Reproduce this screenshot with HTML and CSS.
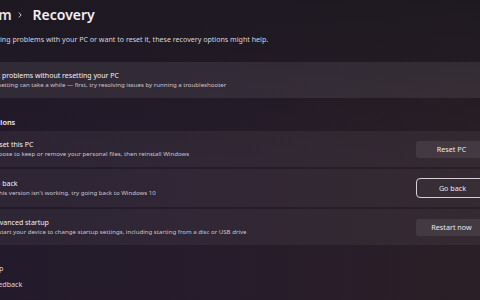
FILE: index.html
```html
<!DOCTYPE html>
<html lang="en">
<head>
    <meta charset="UTF-8">
    <title>Recovery</title>
    <link rel="stylesheet" href="styles.css">
</head>
<body>
    <div class="page">
        <div class="breadcrumb">
            <span class="crumb">System</span>
            <svg class="chevron" viewBox="0 0 6 10"><path d="M1 1l4 4-4 4"></path></svg>
            <span class="current">Recovery</span>
        </div>
        <p class="intro">If you're having problems with your PC or want to reset it, these recovery options might help.</p>

        <div class="card card-plain">
            <span class="card-icon"></span>
            <div class="card-text">
                <div class="card-title">Fix problems without resetting your PC</div>
                <div class="card-sub">Resetting can take a while — first, try resolving issues by running a troubleshooter</div>
            </div>
        </div>

        <h2 class="section">Recovery options</h2>

        <div class="group">
            <div class="card">
                <span class="card-icon"></span>
                <div class="card-text">
                    <div class="card-title">Reset this PC</div>
                    <div class="card-sub">Choose to keep or remove your personal files, then reinstall Windows</div>
                </div>
                <button class="btn">Reset PC</button>
            </div>
            <div class="card">
                <span class="card-icon"></span>
                <div class="card-text">
                    <div class="card-title">Go back</div>
                    <div class="card-sub">If this version isn't working, try going back to Windows 10</div>
                </div>
                <button class="btn btn-focus">Go back</button>
            </div>
            <div class="card">
                <span class="card-icon"></span>
                <div class="card-text">
                    <div class="card-title">Advanced startup</div>
                    <div class="card-sub">Restart your device to change startup settings, including starting from a disc or USB drive</div>
                </div>
                <button class="btn">Restart now</button>
            </div>
        </div>

        <div class="links">
            <a class="link"><span class="link-icon"></span>Get help</a>
            <a class="link"><span class="link-icon"></span>Give feedback</a>
        </div>
    </div>
</body>
</html>
```

FILE: styles.css
```css
:root {
    --text: #f4f0f4;
    --text-dim: #cbc5cc;
    --card: rgba(255, 255, 255, 0.05);
    --card-plain: rgba(255, 255, 255, 0.08);
    --btn: rgba(255, 255, 255, 0.08);
}

html, body {
    height: 100%;
}

body {
    margin: 0;
    overflow: hidden;
    font-family: "Noto Sans", "Open Sans", sans-serif;
    color: var(--text);
    background:
        linear-gradient(180deg, rgba(28, 24, 32, 0.85) 0%, rgba(28, 24, 32, 0) 55%),
        linear-gradient(90deg, #231a2b 0%, #261c2b 45%, #2b1f26 100%);
}

.page {
    width: 546px;
    margin-left: -46px;
    padding-top: 4px;
}

.breadcrumb {
    display: flex;
    align-items: center;
    gap: 6px;
    margin-left: 8px;
    font-size: 14px;
    font-weight: 600;
    line-height: 22px;
}

.crumb {
    color: #e6e2e8;
}

.chevron {
    width: 4px;
    height: 6px;
    margin-right: 5px;
    fill: none;
    stroke: #d8d4da;
    stroke-width: 1.6;
}

.intro {
    margin: 7px 0 0 5px;
    font-size: 7.1px;
    line-height: 12px;
    color: #d8d4da;
}

.card {
    display: flex;
    align-items: center;
    gap: 11px;
    padding: 9px 13px 9px 12px;
    background: var(--card);
    border-radius: 4px;
}

.card-plain {
    margin-top: 17px;
    background: var(--card-plain);
}

.card-icon {
    width: 14px;
    height: 14px;
}

.card-text {
    flex: 1;
}

.card-title {
    font-size: 7px;
    line-height: 9px;
    color: var(--text);
}

.card-sub {
    font-size: 6.1px;
    line-height: 9px;
    color: var(--text-dim);
}

.section {
    margin: 18px 0 3px;
    font-size: 7.3px;
    font-weight: 600;
    line-height: 12px;
    color: var(--text);
}

.group {
    display: flex;
    flex-direction: column;
    gap: 2px;
}

.btn {
    width: 71px;
    height: 17px;
    padding: 0;
    border: none;
    border-radius: 3px;
    background: var(--btn);
    color: #ece8ec;
    font-family: inherit;
    font-size: 7.2px;
}

.btn-focus {
    width: 73px;
    height: 20px;
    margin-right: -2px;
    border: 1.5px solid #d6d0d4;
    border-radius: 4px;
    background: rgba(255, 255, 255, 0.02);
}

.links {
    display: flex;
    flex-direction: column;
    gap: 5px;
    margin-top: 18px;
}

.link {
    display: flex;
    align-items: center;
    gap: 9px;
    font-size: 7.2px;
    line-height: 11px;
    color: #dcd6de;
}

.link-icon {
    width: 12px;
    height: 11px;
}
```
